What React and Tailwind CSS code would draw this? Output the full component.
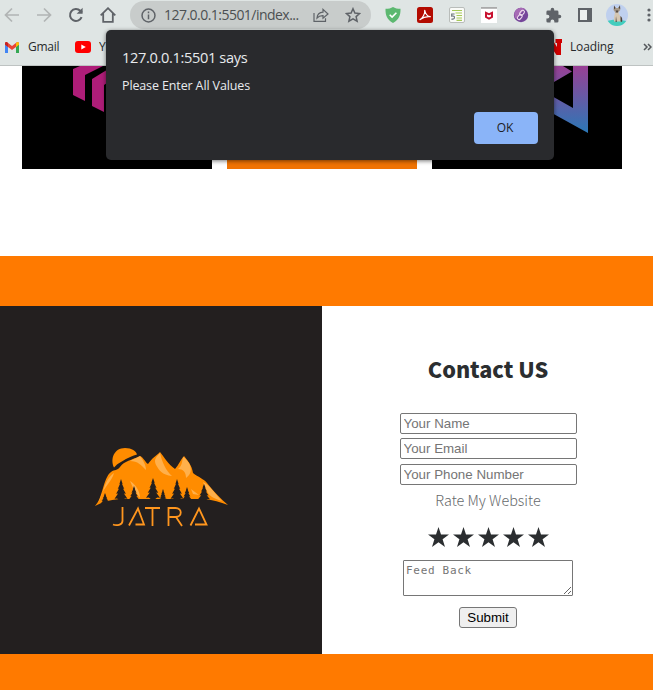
import React from "react";

const ui = "font-['Open_Sans','Noto_Sans',sans-serif]";
const source = "font-['Noto_Sans_CJK_JP',sans-serif]";

function Slot({ children }) {
  return <div className="flex h-[30px] w-8 shrink-0 items-center justify-center">{children}</div>;
}

function Stroke({ children, color = "#5f6368", size = 16, w = 2 }) {
  return (
    <svg width={size} height={size} viewBox="0 0 16 16" fill="none" stroke={color} strokeWidth={w}>
      {children}
    </svg>
  );
}

function Toolbar() {
  return (
    <div className="flex h-[30px] w-[653px] overflow-hidden">
      <div className="-ml-1 flex w-32 shrink-0">
        <Slot><Stroke color="#b1b4b4" w={1.7}><path d="M15 8H2M8 1.5 1.5 8 8 14.5" /></Stroke></Slot>
        <Slot><Stroke color="#b1b4b4" w={1.7}><path d="M1 8h13M8 1.5 14.5 8 8 14.5" /></Stroke></Slot>
        <Slot>
          <Stroke><path d="M13.6 10.2A6 6 0 1 1 12.3 3.8L14 5.4" /><path d="M14.6.8v6H8.6z" fill="#5f6368" stroke="none" /></Stroke>
        </Slot>
        <Slot><Stroke w={1.8}><path d="M.7 8.3 8 1.2l7.3 7.1M3.2 6.6v8.2h9.6V6.6" /></Stroke></Slot>
      </div>
      <div className="ml-1.5 mt-px flex h-7 w-[241px] shrink-0 items-center rounded-full bg-[#c8cccb] pl-[11px]">
        <Stroke size={15} w={1.6}><circle cx="8" cy="8" r="6.9" /><path d="M8 7v5M8 3.8v1.8" /></Stroke>
        <span className={`${ui} ml-[8px] w-[147px] text-[14px] leading-7 tracking-[-0.53px] text-[#4c5052]`}>
          127.0.0.1:5501/index...
        </span>
        <span className="ml-[2px] flex">
          <Stroke size={16} w={1.2}>
            <path d="M1 6v8.4h11.5v-3.2M4 11c.3-3.7 2.3-5.8 6-5.9V2.3L15 7l-5 4.3V8.6C7.500 8.500 5.500 9.300 4 11z" />
          </Stroke>
        </span>
        <span className="ml-4 flex">
          <Stroke size={16} w={1.5}><path d="m8 1.700 1.900 4.300 4.700.5-3.500 3.100 1 4.600L8 11.800l-4.100 2.400 1-4.600L1.400 6.500l4.700-.5z" /></Stroke>
        </span>
      </div>
      <div className="ml-1.5 flex shrink-0">
        <Slot>
          <svg width="16" height="16" viewBox="0 0 16 16"><path d="M8 0c2 1.300 4.500 1.800 7.500 1.800C15.700 8 14 13 8 16 2 13 .3 8 .5 1.800 3.500 1.800 6 1.300 8 0z" fill="#5cb870" /><path d="m4.700 7.700 2.400 2.400 4.300-4.400" stroke="#fff" strokeWidth="1.600" fill="none" /></svg>
        </Slot>
        <Slot>
          <svg width="16" height="16" viewBox="0 0 16 16"><rect width="16" height="16" rx="2.500" fill="#b30b00" /><path d="M3 12.600c2.500-1.200 5.200-6 4.700-9.200 1 4 2.700 6.200 5.600 6.300-3.600-.6-7 .5-10.300 2.900z" stroke="#fff" strokeWidth="1.200" fill="none" strokeLinejoin="round" /></svg>
        </Slot>
        <Slot>
          <svg width="16" height="16" viewBox="0 0 16 16"><rect x=".5" y=".5" width="15" height="15" rx="1.500" fill="#fafbf8" stroke="#b9bdba" /><path d="M3 3.500h10M6.500 6H13M7.500 8.500H13M7.500 11H13M7.500 13.300H13" stroke="#a5c956" strokeWidth="1.200" /><path d="M5.600 7H2.700v2.200c2-.4 3 .2 2.700 1.600-.2 1.200-1.600 1.600-3 1.100" stroke="#667078" strokeWidth="1.100" fill="none" /></svg>
        </Slot>
        <Slot>
          <svg width="16" height="16" viewBox="0 0 16 16"><path d="M0 0h16v16H0z" fill="#fff" /><path d="M0 0h16v1.800H0z" fill="#a9a9a9" /><path d="M4 4.300 8 6.200l4-1.900v6.300l-4 2.200-4-2.200z" fill="#c8102e" /><path d="M6 7.400 8 8.300l2-.9v2.200l-2 1-2-1z" fill="#fff" /></svg>
        </Slot>
        <Slot>
          <svg width="16" height="16" viewBox="0 0 16 16"><circle cx="8" cy="8" r="7.200" fill="#75459a" /><path d="M3 3a7.200 7.200 0 0 1 9-1L3 12A7 7 0 0 1 3 3" fill="#a66bb5" /><g fill="none" stroke="#f0dcef" strokeWidth="1.100"><rect x="7.300" y="3" width="3.400" height="5.600" rx="1.700" transform="rotate(40 9 5.800)" /><rect x="5.100" y="7.200" width="3.400" height="5.600" rx="1.700" transform="rotate(40 6.800 10)" /></g></svg>
        </Slot>
        <Slot>
          <svg width="17" height="17" viewBox="0 0 24 24" fill="#5f6368"><path d="M20.500 11H19V7a2 2 0 0 0-2-2h-4V3.500a2.500 2.500 0 0 0-5 0V5H4a2 2 0 0 0-2 2v3.800h1.500a2.700 2.700 0 0 1 0 5.400H2V20a2 2 0 0 0 2 2h3.800v-1.500a2.700 2.700 0 0 1 5.400 0V22H17a2 2 0 0 0 2-2v-4h1.500a2.500 2.500 0 0 0 0-5z" /></svg>
        </Slot>
        <Slot>
          <svg width="14" height="14" viewBox="0 0 14 14"><path d="M1 1h12v12H1z" fill="#edf0ef" stroke="#5f6368" strokeWidth="2" /><path d="M9 1h4v12H9z" fill="#5f6368" /></svg>
        </Slot>
        <Slot>
          <svg width="22" height="22" viewBox="0 0 22 22"><defs><clipPath id="avatar"><circle cx="11" cy="11" r="11" /></clipPath></defs><g clipPath="url(#avatar)"><path d="M0 0h22v22H0z" fill="#bfd0ee" /><path d="M0 17.500c5-2.500 14-2.500 22 0V22H0z" fill="#42cdbd" /><path d="M9 7.500h3.500c-.5 3 3.500 5 3.500 10H8c-.5-4 1-7 1-10z" fill="#d5c7b2" /><path d="M8 1.500 10 4h2l2-2.700.3 4.700-2.500 3H9.700L7.500 6z" fill="#a79a8a" /><path d="M8 1.500 9.500 4 8 5.500zM14 1.300 14.200 5 12.500 4zM9.500 6.500h3L11 9zM10 12l.8 6H9.600zM14.500 12c2 1.500 2 4 1.500 6l-1.500-.5z" fill="#4d443e" /></g></svg>
        </Slot>
        <Slot>
          <svg width="4" height="14" viewBox="0 0 4 14" fill="#5f6368"><circle cx="2" cy="2" r="1.600" /><circle cx="2" cy="7" r="1.600" /><circle cx="2" cy="12" r="1.600" /></svg>
        </Slot>
      </div>
    </div>
  );
}

function Bookmarks() {
  return (
    <div className={`${ui} flex h-[34px] items-center text-[12px] leading-[18px] text-[#27292b]`}>
      <svg className="ml-[5px]" width="14" height="11" viewBox="0 0 14 11"><path d="M0 1.500V11h3V4.500z" fill="#4285f4" /><path d="M14 1.500V11h-3V4.500z" fill="#34a853" /><path d="M0 1.500C0 0 1.500-.5 2.500.4L7 3.900 11.500.4C12.500-.5 14 0 14 1.500L11 5 7 8 3 5z" fill="#ea4335" /><path d="M0 1.500C0 .5 1-.3 2 .2L3 1v4L0 2.800z" fill="#c5221f" /><path d="M14 1.500C14 .5 13-.3 12 .2L11 1v4l3-2.200z" fill="#fbbc04" /></svg>
      <span className="ml-[9px] w-[31px] tracking-[-0.25px]">Gmail</span>
      <svg className="ml-4" width="16" height="12" viewBox="0 0 16 12"><rect width="16" height="12" rx="3" fill="#f00" /><path d="m6.300 3.400 4.500 2.600-4.500 2.600z" fill="#fff" /></svg>
      <span className="ml-2 w-[8px] overflow-hidden">Yo</span>
      <svg className="ml-[439px]" width="16" height="16" viewBox="0 0 16 16"><path d="M0 0h6l5 8V4H9.500V0H16v4h-1v12h-4.500L5 8v4h1.500v4H0v-4h1V4H0z" fill="#d00000" /></svg>
      <span className="ml-2 w-[60px] tracking-[-0.15px]">Loading</span>
      <svg className="ml-[13px]" width="9" height="8" viewBox="0 0 9 8" fill="none" stroke="#54585b" strokeWidth="1.500"><path d="m1 1 3 3-3 3M5 1l3 3-3 3" /></svg>
    </div>
  );
}

function Dialog() {
  return (
    <div className={`${ui} absolute left-[106px] top-[30px] flex h-[130px] w-[448px] flex-col rounded-[5px] bg-[#292a2d] px-4 pb-4 pt-4 text-[#e8eaed] shadow-[0_1px_4px_rgba(0,0,0,0.55)]`}>
      <div className="text-[14.600px] leading-[22px] tracking-[-0.35px]">127.0.0.1:5501 says</div>
      <div className="mt-[9px] text-[12.500px] leading-[18px] tracking-[-0.13px]">Please Enter All Values</div>
      <button className="mt-auto h-8 w-16 self-end rounded-[4px] bg-[#8ab4f8] pr-[2px] text-[12px] text-[#202124]">OK</button>
    </div>
  );
}

function Cards() {
  return (
    <div className="flex h-[190px] gap-[15px] pl-[22px]">
      <div className="h-[103px] w-[190px] bg-black">
        <svg width="190" height="103" viewBox="22 66 190 103" fill="#ae1d78"><path d="M73 69 80 66h23l-18 9v26l-12-6z" /><path d="m92 79 18-11v13l-6 4v27l-12-6z" /></svg>
      </div>
      <div className="h-[103px] w-[190px] bg-[#ef7303]" />
      <div className="h-[103px] w-[190px] bg-black">
        <svg width="190" height="103" viewBox="432 66 190 103">
          <defs><linearGradient id="brand" x1="0" y1="66" x2="0" y2="133" gradientUnits="userSpaceOnUse"><stop stopColor="#994095" /><stop offset="1" stopColor="#2b78b7" /></linearGradient></defs>
          <path d="M550 66h13l9 5.500-18 10.500h-4zM573 66h15v67l-38-21V95l23 13z" fill="url(#brand)" />
        </svg>
      </div>
    </div>
  );
}

const trees = [
  [25, 63, 12, 9], [41, 49, 22, 13], [54, 56, 15, 10], [73, 48, 22, 14],
  [83, 59, 11, 7], [97, 49, 22, 13], [107, 57, 14, 9], [124, 54, 17, 12],
];

function Tree({ x, y, h, w }) {
  const bottom = y + h;
  const tiers = [1, 2, 3, 4].map((i) => [(w / 2) * (i / 4), y + (h * 0.9 * i) / 4]);
  const right = tiers.map(([half, ty]) => `L${x + half} ${ty}L${x + half * 0.6} ${ty - 0.3}`).join("");
  const left = [...tiers].reverse().map(([half, ty]) => `L${x - half * 0.6} ${ty - 0.3}L${x - half} ${ty}`).join("");
  return <path d={`M${x} ${y}${right}L${x + 1} ${bottom}L${x - 1} ${bottom}${left}Z`} fill="#231f1f" />;
}

function Logo() {
  return (
    <svg className="ml-20 mt-[124px] block" width="170" height="110" viewBox="0 0 170 110">
      <path d="M34 37.500C30 29 34 18 45 18c7 0 11 3 12 6.500-9 2.500-15 7-20 10z" fill="#ff8c00" />
      <path d="M15 76c8-8 8-28 16-34 4-3 6-1 9-5 4-6 12-7 20-11 4 2 5 6 8 8 4-6 8-8 12-12 4 5 8 12 15 17 4-4 5-9 9-13 3 4 8 9 9 17 5 4 11 6 14 10 6 8 14 16 21 22-8-3-15-5-23-6H44c-12 0-19 2-29 7z" fill="#ff8c00" />
      <g fill="#ffb04b">
        <path d="M34 43c-2 8-10 14-13 23l-3 7c6-9 5-22 16-30z" />
        <path d="M60 26c-3 2-7 3-10 5 8 0 11 4 16 9 0-5-3-10-6-14zM80 23c-5 5-6 7-4 12 3 5 6 10 16 11-6-5-10-14-12-23zM103 27c-1 5-1 9-5 12 5 0 8 3 8 9 9-6 4-17-3-21zM123 52c7 3 12 12 19 19-6-2-13-4-15-10zM50 51c4 2 10 9 10 17l-6-8zM111 59l8 6-6-1z" />
      </g>
      {trees.map(([x, y, h, w]) => <Tree key={x} x={x} y={y} h={h} w={w} />)}
      <g aria-label="JATRA" fill="none" stroke="#ff961e" strokeWidth="1.800">
        <path d="M42.500 77v14c0 4-6 5-9.500 3.500" />
        <path d="m49 95.500 9-17 6 16h-8.500" />
        <path d="M65 78h15M72.500 78v18" />
        <path d="M88.500 96V78h7c7 0 7 9 0 9h-6M96 87l6 9" />
        <path d="m110.500 95.500 8.500-17 7.500 16H115" />
      </g>
    </svg>
  );
}

function Field({ label }) {
  return (
    <input
      placeholder={label}
      className="block h-[21px] w-[177px] rounded-[2px] border border-[#767676] bg-white px-[3px] font-['Liberation_Sans',Arial,sans-serif] text-[13.333px] leading-[15px] placeholder:text-[#757575]"
    />
  );
}

function Star() {
  return (
    <svg width="21" height="20" viewBox="0 0 21 20" fill="#2b2e30"><path d="m10.500 0 2.500 7.500h8l-6.400 4.700L17 20l-6.500-4.800L4 20l2.400-7.800L0 7.500h8z" /></svg>
  );
}

function Contact() {
  return (
    <div className="flex flex-1 flex-col items-center bg-white pl-[1px] pt-[45px]">
      <h2 className={`${source} h-9 whitespace-nowrap text-[21.600px] font-black leading-9 text-[#2b2e30]`}>Contact US</h2>
      <div className="mt-[26px] flex flex-col gap-1">
        <Field label="Your Name" />
        <Field label="Your Email" />
        <div className="pt-px"><Field label="Your Phone Number" /></div>
      </div>
      <p className={`${source} h-[29px] whitespace-nowrap text-[14.400px] font-light leading-[29px] text-[#66696b]`}>Rate My Website</p>
      <div className="mt-[13px] flex gap-1">
        <Star /><Star /><Star /><Star /><Star />
      </div>
      <textarea
        placeholder="Feed Back"
        className="mt-[13px] block h-9 w-[170px] shrink-0 resize rounded-[1px] border border-[#767676] bg-white px-[2px] py-[2px] font-['DejaVu_Sans_Mono',monospace] text-[11px] leading-[16px] tracking-[0.7px] placeholder:text-[#757575]"
      />
      <button className="mt-[11px] h-[21px] w-[58px] rounded-[3px] border border-[#767676] bg-[#efefef] font-['Liberation_Sans',Arial,sans-serif] text-[13.333px] leading-[17px] text-black">Submit</button>
    </div>
  );
}

export default function App() {
  return (
    <div className="relative h-[690px] w-[653px] overflow-hidden bg-white">
      <div className="h-[66px] border-b border-[#bec3c2] bg-[#dfe5e4]">
        <Toolbar />
        <Bookmarks />
      </div>
      <Cards />
      <div className="h-[50px] bg-[#ff7a00]" />
      <div className="flex h-[348px]">
        <div className="w-[322px] bg-[#231f1f]"><Logo /></div>
        <Contact />
      </div>
      <div className="h-9 bg-[#ff7a00]" />
      <Dialog />
    </div>
  );
}
